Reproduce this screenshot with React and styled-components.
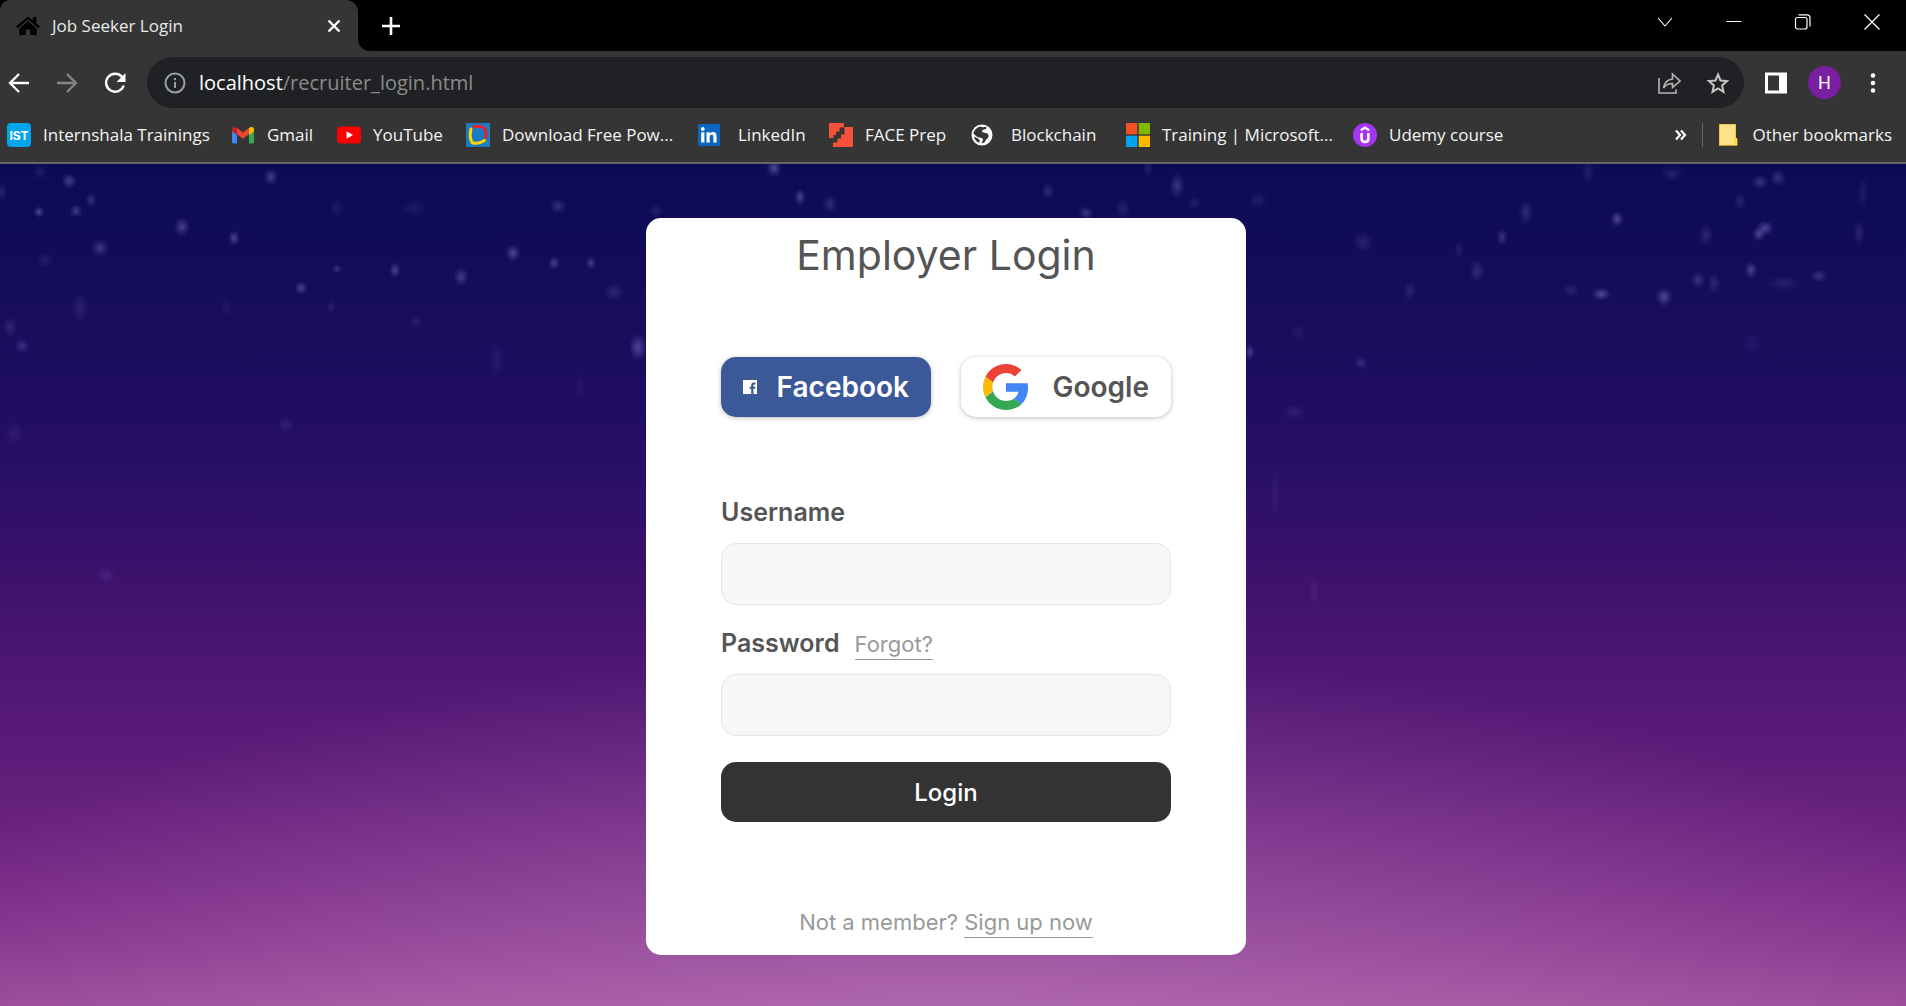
import React from 'react';
import styled, { createGlobalStyle } from 'styled-components';

const ui = '"Open Sans", "Noto Sans", sans-serif';
const brand = 'Inter, "Open Sans", sans-serif';

const GlobalStyle = createGlobalStyle`
  *, *::before, *::after { box-sizing: border-box; }
  body { margin: 0; font-family: ${ui}; background: #0b0b54; }
  button, input { font: inherit; }
`;

const Shell = styled.div`
  display: flex;
  flex-direction: column;
  min-height: 100vh;
`;

/* ---------- browser chrome ---------- */

const Chrome = styled.header`
  background: #353535;
  color: #fff;
  border-bottom: 2px solid #666;
`;

const TabStrip = styled.div`
  display: flex;
  height: 51px;
`;

const TabSlot = styled.div`
  flex: 0 0 358px;
  background: #000;
`;

const Tab = styled.div`
  display: flex;
  align-items: center;
  gap: 12px;
  height: 100%;
  padding: 0 12px 0 16px;
  background: #353535;
  border-radius: 10px 12px 0 0;
`;

const TabTitle = styled.span`
  flex: 1;
  font-size: 17px;
  line-height: 24px;
  color: #e9e9e9;
`;

const StripRest = styled.div`
  flex: 1;
  display: flex;
  align-items: center;
  justify-content: space-between;
  padding: 0 22px 0 21px;
  background: #000;
  border-bottom-left-radius: 12px;
`;

const WindowControls = styled.div`
  display: flex;
  align-items: center;
  align-self: flex-start;
  gap: 45px;
  height: 44px;
`;

const IconButton = styled.button`
  display: flex;
  align-items: center;
  justify-content: center;
  flex: none;
  width: 24px;
  height: 24px;
  padding: 0;
  border: 0;
  background: none;
  color: ${(p) => p.$color || '#fff'};
  cursor: pointer;
`;

const Toolbar = styled.div`
  display: flex;
  align-items: center;
  gap: 20px;
  padding: 6px 21px 0 7px;
`;

const NavButtons = styled.nav`
  display: flex;
  gap: 24px;
`;

const Omnibox = styled.div`
  flex: 1;
  display: flex;
  align-items: center;
  gap: 12px;
  height: 51px;
  padding: 0 14px 0 16px;
  border-radius: 26px;
  background: #202124;
`;

const Address = styled.span`
  flex: 1;
  font-size: 20px;
  line-height: 28px;
  color: #8b8b8b;
`;

const Host = styled.span`
  color: #fff;
`;

const OmniActions = styled.div`
  display: flex;
  gap: 25px;
`;

const Avatar = styled.button`
  width: 33px;
  height: 33px;
  padding: 0;
  border: 0;
  border-radius: 50%;
  background: #7b1fa2;
  color: #fff;
  font: 400 18px/33px Roboto, sans-serif;
`;

const Bookmarks = styled.nav`
  display: flex;
  align-items: center;
  height: 54px;
  padding: 0 14px 0 7px;
`;

const Bookmark = styled.a`
  display: flex;
  align-items: center;
  flex: none;
  gap: ${(p) => p.$gap || 12}px;
  width: ${(p) => (p.$width ? `${p.$width}px` : 'auto')};
  font-size: 17px;
  line-height: 24px;
  white-space: nowrap;
  color: #f4f4f4;
  text-decoration: none;

  svg { flex: none; }
`;

const Overflow = styled.div`
  display: flex;
  align-items: center;
  gap: 10px;
  margin-left: auto;
`;

const Divider = styled.span`
  width: 1px;
  height: 24px;
  margin-right: 6px;
  background: #666;
`;

/* ---------- login page ---------- */

const Page = styled.main`
  position: relative;
  flex: 1;
  display: flex;
  justify-content: center;
  align-items: flex-start;
  padding: 54px 14px 51px 0;
  background:
    radial-gradient(ellipse 60% 46% at 50% 104%, rgba(206, 146, 200, 0.44), rgba(206, 146, 200, 0.26) 50%, rgba(206, 146, 200, 0) 100%),
    linear-gradient(to bottom,
      #0b0b54 0%, #170d5b 17%, #200d62 29%, #2e1068 40%, #3d116c 49%,
      #501874 61%, #5d1c79 71%, #6b227f 79%, #772a86 86%, #85368e 93%, #984898 100%);
`;

const Sky = styled.svg`
  position: absolute;
  inset: 0;
  width: 100%;
  height: 100%;
  opacity: 0.88;
`;

const Card = styled.section`
  position: relative;
  width: 600px;
  max-width: 100%;
  padding: 12px 75px 17px;
  border-radius: 15px;
  background: #fff;
  color: #555;
  font-family: ${brand};
`;

const Title = styled.h1`
  margin: 0 0 77px;
  font-size: 41px;
  font-weight: 400;
  line-height: 50px;
  text-align: center;
`;

const SocialRow = styled.div`
  display: grid;
  grid-template-columns: 1fr 1fr;
  gap: 30px;
  margin-bottom: 77px;
`;

const SocialButton = styled.button`
  display: flex;
  align-items: center;
  justify-content: space-between;
  height: 60px;
  padding: 0 22px;
  border: 0;
  border-radius: 15px;
  background: ${(p) => (p.$filled ? '#3b5998' : '#fff')};
  color: ${(p) => (p.$filled ? '#fff' : '#555')};
  box-shadow: 0 1px 5px rgba(0, 0, 0, 0.25);
  font-size: 28px;
  font-weight: 600;
  cursor: pointer;
`;

const Field = styled.div`
  display: flex;
  flex-direction: column;
  gap: 13px;
  margin-bottom: ${(p) => p.$after}px;
`;

const LabelRow = styled.div`
  display: flex;
  align-items: baseline;
  gap: 15px;
  height: 36px;
`;

const Label = styled.label`
  font-size: 25px;
  font-weight: 600;
  line-height: 36px;
`;

const TextBox = styled.input`
  width: 100%;
  height: 62px;
  padding: 0 20px;
  border: 1px solid #e6e6e6;
  border-radius: 15px;
  background: #f7f7f7;
  color: #555;
  font-size: 22px;
  outline: none;
`;

const TextLink = styled.a`
  display: inline-block;
  padding-bottom: 2px;
  border-bottom: 1px solid #999;
  color: #999;
  font-size: 22px;
  line-height: 26px;
  text-decoration: none;
`;

const Submit = styled.button`
  display: block;
  width: 100%;
  height: 60px;
  margin-bottom: 85px;
  border: 0;
  border-radius: 15px;
  background: #333;
  color: #fff;
  font-size: 24px;
  font-weight: 500;
  cursor: pointer;
`;

const Footnote = styled.p`
  margin: 0;
  color: #999;
  font-size: 22px;
  line-height: 31px;
  text-align: center;
`;

/* x, y, brightness, rx, ry */
const stars = [
  [69, 181, 0.55, 8, 8], [91, 200, 0.4, 6, 8], [76, 211, 0.5, 7, 7], [39, 212, 0.6, 6, 6],
  [100, 248, 0.5, 9, 9], [182, 227, 0.55, 8, 10], [234, 238, 0.6, 6, 8], [271, 177, 0.5, 8, 9],
  [337, 208, 0.15, 8, 10], [414, 208, 0.16, 14, 9], [558, 206, 0.4, 9, 8], [513, 253, 0.6, 8, 9],
  [554, 263, 0.55, 6, 7], [591, 263, 0.5, 6, 7], [614, 292, 0.3, 11, 9], [301, 288, 0.6, 7, 7],
  [337, 269, 0.4, 5, 5], [395, 270, 0.55, 6, 8], [461, 277, 0.5, 8, 10], [80, 308, 0.25, 9, 15],
  [10, 327, 0.25, 8, 12], [22, 346, 0.4, 8, 8], [638, 347, 0.6, 9, 14], [416, 322, 0.2, 8, 8],
  [497, 360, 0.13, 8, 20], [286, 425, 0.2, 9, 9], [14, 433, 0.18, 10, 12], [106, 575, 0.22, 10, 9],
  [45, 260, 0.2, 9, 8], [2, 192, 0.25, 6, 10], [40, 172, 0.2, 8, 8], [331, 307, 0.2, 5, 8],
  [580, 387, 0.1, 8, 20], [226, 308, 0.12, 8, 12], [774, 168, 0.65, 8, 10], [800, 197, 0.6, 6, 9],
  [830, 204, 0.35, 8, 10], [656, 211, 0.22, 8, 8], [1048, 191, 0.35, 7, 9], [1177, 186, 0.45, 8, 14],
  [1086, 213, 0.45, 8, 7], [1123, 209, 0.25, 8, 11], [1148, 168, 0.2, 6, 10], [1194, 203, 0.2, 8, 8],
  [1258, 200, 0.22, 10, 9], [1363, 242, 0.25, 11, 11], [1410, 291, 0.25, 7, 11], [1502, 237, 0.45, 6, 9],
  [1526, 212, 0.35, 8, 13], [1477, 271, 0.35, 8, 12], [1459, 250, 0.2, 5, 8], [1617, 219, 0.65, 7, 8],
  [1601, 294, 0.65, 10, 7], [1571, 290, 0.25, 9, 7], [1664, 297, 0.6, 9, 10], [1698, 280, 0.4, 8, 9],
  [1714, 283, 0.3, 7, 11], [1751, 270, 0.55, 7, 9], [1765, 228, 0.6, 9, 8], [1759, 234, 0.6, 7, 8],
  [1760, 182, 0.4, 9, 8], [1778, 178, 0.4, 9, 9], [1740, 201, 0.25, 7, 9], [1672, 174, 0.25, 12, 8],
  [1588, 172, 0.22, 7, 14], [1706, 235, 0.28, 8, 12], [1859, 233, 0.28, 6, 13], [1819, 276, 0.4, 9, 7],
  [1783, 283, 0.22, 18, 8], [1361, 363, 0.35, 7, 7], [1294, 412, 0.2, 13, 9], [1250, 352, 0.5, 5, 8],
  [1298, 332, 0.15, 8, 10], [1752, 343, 0.12, 10, 14], [1275, 493, 0.13, 6, 26], [1314, 590, 0.16, 6, 18],
  [1863, 193, 0.18, 6, 18],
];

function NightSky() {
  return (
    <Sky viewBox="0 164 1906 842" preserveAspectRatio="none" aria-hidden="true">
      <defs>
        <radialGradient id="star">
          <stop offset="0" stopColor="#8478cc" />
          <stop offset="0.4" stopColor="#7468c0" stopOpacity="0.65" />
          <stop offset="1" stopColor="#6a5cb8" stopOpacity="0" />
        </radialGradient>
      </defs>
      {stars.map(([x, y, o, rx, ry]) => (
        <ellipse key={`${x}-${y}`} cx={x} cy={y} rx={rx} ry={ry} fill="url(#star)" opacity={o} />
      ))}
    </Sky>
  );
}

const Stroke = ({ d, size = 24, width = 2, children }) => (
  <svg width={size} height={size} viewBox="0 0 24 24" fill="none" stroke="currentColor" strokeWidth={width} aria-hidden="true">
    {d && <path d={d} />}
    {children}
  </svg>
);

const HomeIcon = () => (
  <svg width="24" height="24" viewBox="0 0 24 24" aria-hidden="true">
    <path fill="#000" d="M12 2.5 0 12.6l1.5 1.7L12 5.5l10.500 8.800L24 12.600l-3.600-3V3h-3.600v3.500z" />
    <path fill="#000" d="M12 7.200 3.200 14.500V21H9.800v-5.500h4.400V21h6.600v-6.500z" />
  </svg>
);

const GoogleIcon = () => (
  <svg width="46" height="46" viewBox="0 0 48 48" aria-hidden="true">
    <path fill="#ea4335" d="M24 9.5c3.540 0 6.710 1.220 9.210 3.600l6.850-6.850C35.900 2.380 30.470 0 24 0 14.620 0 6.510 5.380 2.560 13.220l7.980 6.190C12.430 13.720 17.740 9.500 24 9.500z" />
    <path fill="#4285f4" d="M46.980 24.550c0-1.570-.150-3.090-.380-4.550H24v9.020h12.940c-.580 2.960-2.260 5.480-4.780 7.180l7.730 6c4.510-4.180 7.090-10.360 7.090-17.650z" />
    <path fill="#fbbc05" d="M10.530 28.590c-.480-1.450-.760-2.990-.760-4.590s.270-3.140.760-4.590l-7.980-6.190C.920 16.460 0 20.120 0 24c0 3.880.920 7.540 2.560 10.780l7.970-6.190z" />
    <path fill="#34a853" d="M24 48c6.480 0 11.930-2.130 15.890-5.810l-7.730-6c-2.150 1.450-4.920 2.300-8.160 2.300-6.260 0-11.570-4.220-13.470-9.910l-7.980 6.190C6.510 42.620 14.620 48 24 48z" />
  </svg>
);

const FacebookIcon = () => (
  <svg width="14" height="14" viewBox="0 0 14 14" aria-hidden="true">
    <path fill="#fff" d="M0 0h14v14h-3.600V8.800h1.800l.3-2.100h-2.100V5.500c0-.6.3-1 1-1h1.100V2.600h-1.600c-1.800 0-2.700 1.100-2.700 2.700v1.400H6.500v2.100h1.700V14H0z" />
  </svg>
);

const InternshalaIcon = () => (
  <svg width="24" height="24" viewBox="0 0 24 24" aria-hidden="true">
    <rect width="24" height="24" rx="4" fill="#00a5ec" />
    <text x="12" y="17" textAnchor="middle" fontFamily="Inter, sans-serif" fontWeight="700" fontSize="12" fill="#fff">IST</text>
  </svg>
);

const GmailIcon = () => (
  <svg width="24" height="24" viewBox="0 0 24 24" aria-hidden="true">
    <path fill="#4285f4" d="M1 7.500V19c0 .8.700 1.500 1.500 1.500H6V11z" />
    <path fill="#34a853" d="M23 7.500V19c0 .8-.7 1.500-1.500 1.500H18V11z" />
    <path fill="#ea4335" d="M6 5v6.200l6 4.600 6-4.600V5l-6 4.600z" />
    <path fill="#c5221f" d="M1 6.500v1.800l5 3.700V5C4 3.400 1 3.800 1 6.500z" />
    <path fill="#fbbc04" d="M23 6.500v1.800L18 12V5c2-1.600 5-1.200 5 1.500z" />
  </svg>
);

const YouTubeIcon = () => (
  <svg width="24" height="24" viewBox="0 0 24 24" aria-hidden="true">
    <rect y="3.500" width="24" height="17" rx="4" fill="#f00" />
    <path fill="#fff" d="M9.500 8.200v7.600L16 12z" />
  </svg>
);

const SlideIcon = () => (
  <svg width="24" height="24" viewBox="0 0 24 24" fill="none" strokeWidth="3" strokeLinecap="round" aria-hidden="true">
    <rect width="24" height="24" fill="#1a7bbf" />
    <path stroke="#ffd600" d="M5 6C4 10 4 15 5.500 18.500c1 2 3 2 5.500 1.700s5-1.200 7.500-2.700" />
    <path stroke="#ee1c2e" d="M8 4c4-1 8.500-.5 10.500 1.500s1.700 6 1.300 9" />
  </svg>
);

const LinkedInIcon = () => (
  <svg width="22" height="22" viewBox="0 0 22 22" aria-hidden="true">
    <rect width="22" height="22" rx="2" fill="#0a66c2" />
    <path fill="#fff" d="M3.200 8.300h3.200V18.600H3.200zM8.500 8.300h3v1.400c.5-.9 1.600-1.700 3.200-1.700 3.200 0 3.900 2 3.900 4.900v5.700h-3.200v-5.100c0-1.300-.1-2.700-1.800-2.700s-1.900 1.300-1.900 2.600v5.200H8.500z" />
    <circle cx="4.800" cy="5" r="1.900" fill="#fff" />
  </svg>
);

const FaceIcon = () => (
  <svg width="24" height="24" viewBox="0 0 24 24" aria-hidden="true">
    <path fill="#f4513a" d="M0 0h15v4.500h-4.500v4H7v3.500H4.500v3H0zM15.500 7.500V4H24v20H4v-4.500h4.500v-4H12v-4h3.500z" />
  </svg>
);

const GlobeIcon = () => (
  <svg width="22" height="22" viewBox="0 0 22 22" aria-hidden="true">
    <circle cx="11" cy="11" r="10.500" fill="#fff" />
    <path fill="#353535" d="M9 2.500c2 1 4.500.8 6 .3l.5 1.700c-1.500 1.300-4 .8-4.500 2.300s1.500 2 3.500 2.200 3.500 1.500 3 3.700-2.500 2-3 3.800-2 2.700-4 2.500c.2-1.200 1.300-1.800 1.500-3s-.8-2-2.500-2.200-3.500-.8-5-2.300L2.300 9.500C3 6.500 5.500 3.500 9 2.500zM3 12.500l3.500 1.800 2.200 1.700-.2 2.800C5.500 18 3.500 15.500 3 12.500z" />
  </svg>
);

const MicrosoftIcon = () => (
  <svg width="24" height="24" viewBox="0 0 24 24" aria-hidden="true">
    <path fill="#f25022" d="M0 0h11.300v11.300H0z" />
    <path fill="#7fba00" d="M12.700 0H24v11.300H12.700z" />
    <path fill="#00a4ef" d="M0 12.700h11.300V24H0z" />
    <path fill="#ffb900" d="M12.700 12.700H24V24H12.700z" />
  </svg>
);

const UdemyIcon = () => (
  <svg width="24" height="24" viewBox="0 0 24 24" fill="none" stroke="#fff" aria-hidden="true">
    <circle cx="12" cy="12" r="12" fill="#a435f0" stroke="none" />
    <path strokeWidth="2.200" d="M7.800 7.200 12 4.600l4.200 2.600" />
    <path strokeWidth="2.600" d="M8.600 10v5.500c0 4.600 6.800 4.600 6.800 0V10" />
  </svg>
);

const FolderIcon = () => (
  <svg width="19" height="22" viewBox="0 0 19 22" aria-hidden="true">
    <path fill="#ffe38b" stroke="#f2c744" d="M.5.500h16V15H18v6.500H.5z" />
    <path fill="#ffd84f" d="M14.500 14h3.500v7h-3.500z" />
    <path stroke="#c79a20" d="M1 21.500h17" />
  </svg>
);

const bookmarks = [
  { name: 'Internshala Trainings', icon: InternshalaIcon, width: 224 },
  { name: 'Gmail', icon: GmailIcon, width: 106 },
  { name: 'YouTube', icon: YouTubeIcon, width: 129 },
  { name: 'Download Free Pow...', icon: SlideIcon, width: 232 },
  { name: 'LinkedIn', icon: LinkedInIcon, width: 131, gap: 18 },
  { name: 'FACE Prep', icon: FaceIcon, width: 142 },
  { name: 'Blockchain', icon: GlobeIcon, width: 155, gap: 18 },
  { name: 'Training | Microsoft...', icon: MicrosoftIcon, width: 227 },
  { name: 'Udemy course', icon: UdemyIcon, width: 150 },
];

function BrowserChrome() {
  return (
    <Chrome>
      <TabStrip>
        <TabSlot>
          <Tab>
            <HomeIcon />
            <TabTitle>Job Seeker Login</TabTitle>
            <IconButton aria-label="Close tab">
              <Stroke d="M6.500 6.500l11 11M17.500 6.500l-11 11" width={2.400} />
            </IconButton>
          </Tab>
        </TabSlot>
        <StripRest>
          <IconButton aria-label="New tab">
            <Stroke d="M12 3v18M3 12h18" width={2.600} />
          </IconButton>
          <WindowControls>
            <IconButton aria-label="Search tabs">
              <Stroke d="M5 8l7 8 7-8" width={1.100} />
            </IconButton>
            <IconButton aria-label="Minimize">
              <Stroke d="M4.500 11.500h15" width={1} />
            </IconButton>
            <IconButton aria-label="Restore">
              <Stroke width={1.200}>
                <rect x="4.500" y="7.500" width="11.500" height="11.500" rx="2" />
                <path d="M7.500 4.800h8.500a3 3 0 0 1 3 3V16.500" />
              </Stroke>
            </IconButton>
            <IconButton aria-label="Close window">
              <Stroke d="M4.500 4.500l15 15M19.500 4.500l-15 15" width={1.300} />
            </IconButton>
          </WindowControls>
        </StripRest>
      </TabStrip>

      <Toolbar>
        <NavButtons>
          <IconButton aria-label="Back">
            <Stroke d="M22 12H3.500M12 3l-9 9 9 9" width={2.300} />
          </IconButton>
          <IconButton aria-label="Forward" $color="#868686">
            <Stroke d="M2 12h18.500M12 3l9 9-9 9" width={2.300} />
          </IconButton>
          <IconButton aria-label="Reload">
            <svg width="24" height="24" viewBox="0 0 24 24" aria-hidden="true">
              <path fill="none" stroke="#fff" strokeWidth="2.400" d="M19.300 6.300A9 9 0 1 0 20.700 14.500" />
              <path fill="#fff" d="M22.500 2v9h-9z" />
            </svg>
          </IconButton>
        </NavButtons>
        <Omnibox>
          <IconButton aria-label="Site information" $color="#9aa0a6">
            <Stroke>
              <circle cx="12" cy="12" r="9.500" />
              <path d="M12 11v6M12 7v2.200" />
            </Stroke>
          </IconButton>
          <Address role="textbox" aria-label="Address" tabIndex={0}>
            <Host>localhost</Host>/recruiter_login.html
          </Address>
          <OmniActions>
            <IconButton aria-label="Share" $color="#b6b6b6">
              <Stroke width={1.600}>
                <path d="M2 7v15h17v-3.500" />
                <path d="M6.500 17C7.500 11.500 10.500 8.500 15.500 8V3l7.500 7-7.500 6.500V12.500c-4 0-6.700 1.300-9 4.500z" />
              </Stroke>
            </IconButton>
            <IconButton aria-label="Bookmark this page" $color="#c6c6c6">
              <Stroke d="M12 3.500l2.500 6 6.500.6-4.900 4.300 1.400 6.400L12 17.400l-5.500 3.400 1.400-6.400L3 10.100l6.500-.6z" width={2} />
            </IconButton>
          </OmniActions>
        </Omnibox>
        <IconButton aria-label="Side panel">
          <svg width="24" height="24" viewBox="0 0 24 24" aria-hidden="true">
            <path fill="#fff" fillRule="evenodd" d="M1 1.500h22v21H1zM4 4.500v15h11v-15z" />
          </svg>
        </IconButton>
        <Avatar aria-label="Profile">H</Avatar>
        <IconButton aria-label="Menu">
          <svg width="24" height="24" viewBox="0 0 24 24" fill="#fff" aria-hidden="true">
            <circle cx="12" cy="4.500" r="2.300" />
            <circle cx="12" cy="12" r="2.300" />
            <circle cx="12" cy="19.500" r="2.300" />
          </svg>
        </IconButton>
      </Toolbar>

      <Bookmarks aria-label="Bookmarks">
        {bookmarks.map(({ name, icon: Icon, width, gap }) => (
          <Bookmark key={name} href="#" $width={width} $gap={gap}>
            <Icon />
            {name}
          </Bookmark>
        ))}
        <Overflow>
          <IconButton aria-label="More bookmarks">
            <Stroke d="M8 7.500l4 4.500-4 4.500M13 7.500l4 4.500-4 4.500" width={2.200} />
          </IconButton>
          <Divider />
          <Bookmark href="#" $gap={14}>
            <FolderIcon />
            Other bookmarks
          </Bookmark>
        </Overflow>
      </Bookmarks>
    </Chrome>
  );
}

function LoginCard() {
  return (
    <Card>
      <Title>Employer Login</Title>
      <SocialRow>
        <SocialButton type="button" $filled>
          <FacebookIcon />
          Facebook
        </SocialButton>
        <SocialButton type="button">
          <GoogleIcon />
          Google
        </SocialButton>
      </SocialRow>
      <form onSubmit={(e) => e.preventDefault()}>
        <Field $after={20}>
          <LabelRow>
            <Label htmlFor="username">Username</Label>
          </LabelRow>
          <TextBox id="username" type="text" />
        </Field>
        <Field $after={26}>
          <LabelRow>
            <Label htmlFor="password">Password</Label>
            <TextLink href="#">Forgot?</TextLink>
          </LabelRow>
          <TextBox id="password" type="password" />
        </Field>
        <Submit type="submit">Login</Submit>
      </form>
      <Footnote>
        Not a member? <TextLink href="#">Sign up now</TextLink>
      </Footnote>
    </Card>
  );
}

export default function App() {
  return (
    <Shell>
      <GlobalStyle />
      <BrowserChrome />
      <Page>
        <NightSky />
        <LoginCard />
      </Page>
    </Shell>
  );
}
